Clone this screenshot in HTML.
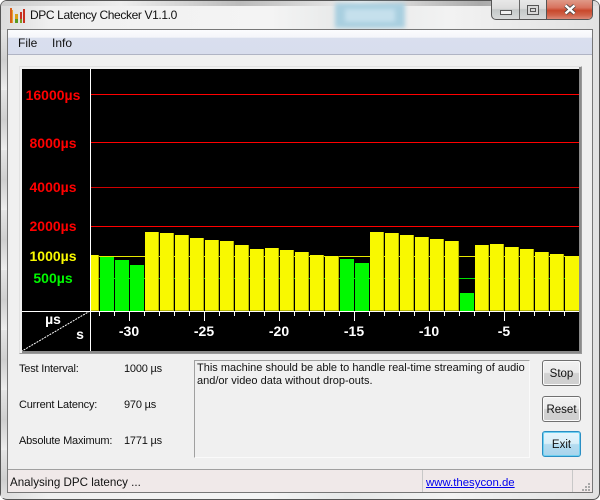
<!DOCTYPE html>
<html><head><meta charset="utf-8">
<style>
html,body{margin:0;padding:0;width:600px;height:500px;overflow:hidden;background:#fff}
body{position:relative;font-family:"Liberation Sans",sans-serif;font-size:12px;color:#111}
div,a,span{position:absolute;box-sizing:border-box;white-space:nowrap}
.b{top:0}.y{background:#f9f900;border-right:1px solid #b4b400;border-bottom:1px solid #b4b400}
.g{background:#00f900}
.l{height:1px;left:91px;width:488px}
.gl{font:bold 14px/16px "Liberation Sans",sans-serif;text-align:center;width:80px;left:13px}
.n{color:#fff;font:bold 14px/16px "Liberation Sans",sans-serif;text-align:center;width:50px;top:323px}
.t{background:#fff;width:1px;top:311px;height:5px}
.btn{left:542px;width:39px;height:26px;border:1px solid #707070;border-radius:3px;background:linear-gradient(#f2f2f2 0,#ebebeb 48%,#d2d2d2 52%,#cfcfcf 100%);box-shadow:inset 0 0 0 1px #fbfbfb;text-align:center;line-height:26px;font-size:11.5px}
.lb{left:19px;font-size:11px;letter-spacing:-.2px}
</style></head><body>
<!-- frame -->
<div style="left:0;top:0;width:600px;height:500px;border:1px solid #555;border-radius:7px;background:linear-gradient(90deg,#dcdcdc,#f0f0f0 8%,#f4f4f4 45%,#e6e8e8 58%,#f2f2f2 75%,#e2e2e2)"></div>
<div style="left:1px;top:1px;width:598px;height:5px;background:linear-gradient(90deg,#ccc,#eee 20%,#bbb 40%,#eee 60%,#aaa 80%,#ddd);border-radius:6px 6px 0 0"></div>
<div style="left:1px;top:30px;width:6px;height:468px;background:repeating-linear-gradient(#e4e4e4 0,#cfcfcf 30px,#eeeeee 60px)"></div>
<div style="left:335px;top:3px;width:70px;height:25px;background:#a9cfe0;filter:blur(2px)"></div>
<div style="left:345px;top:9px;width:50px;height:13px;background:#c5e0ec;filter:blur(2px)"></div>
<!-- icon -->
<svg style="position:absolute;left:9px;top:8px" width="16" height="16"><rect x="1" y="0" width="2" height="15" fill="#d9601a"/><rect x="3" y="2" width="1" height="13" fill="#e8a030"/><rect x="6" y="6" width="3" height="9" fill="#d8a018"/><rect x="6" y="11" width="3" height="4" fill="#5a9a20"/><rect x="11" y="4" width="2" height="11" fill="#c83020"/><rect x="14" y="1" width="2" height="14" fill="#c83020"/><rect x="11" y="11" width="2" height="4" fill="#7a9a20"/></svg>
<div style="left:30px;top:7px;font-size:12px;line-height:16px;color:#111;letter-spacing:-.38px">DPC Latency Checker V1.1.0</div>
<!-- caption buttons -->
<div style="left:491px;top:0;width:102px;height:20px;border:1px solid #555;border-top:0;border-radius:0 0 5px 5px;background:linear-gradient(#e8e8e8,#dcdcdc 45%,#c4c8c8 50%,#d8dada);overflow:hidden">
 <div style="left:27px;top:0;width:1px;height:19px;background:#666"></div>
 <div style="left:54px;top:0;width:47px;height:19px;background:linear-gradient(#e09a88,#d8735f 40%,#c8482c 55%,#d0634a 80%,#dc8a78);border-left:1px solid #555"></div>
 <div style="left:8px;top:10px;width:12px;height:5px;background:#f0f0f0;border:1px solid #555"></div>
 <div style="left:35px;top:5px;width:12px;height:10px;border:1px solid #555;background:#d8d8d8"></div>
 <div style="left:38px;top:8px;width:6px;height:4px;border:1px solid #555"></div>
 <svg style="position:absolute;left:72px;top:4px" width="12" height="11"><path d="M1.5 1.5L10.5 9.5M10.5 1.5L1.5 9.5" stroke="#444" stroke-width="4"/><path d="M1.5 1.5L10.5 9.5M10.5 1.5L1.5 9.5" stroke="#fff" stroke-width="2.4"/></svg>
</div>
<!-- client -->
<div style="left:7px;top:29px;width:586px;height:464px;border:1px solid #777;background:#f0f0f0"></div>
<div style="left:8px;top:30px;width:584px;height:25px;background:linear-gradient(#fbfcfe 0,#f5f6fa 30%,#d9dfee 34%,#d8dded 100%);border-bottom:1px solid #b0b4c4"></div>
<div style="left:18px;top:36px;line-height:14px">File</div>
<div style="left:52px;top:36px;line-height:14px">Info</div>
<!-- graph -->
<div style="left:19px;top:66px;width:563px;height:288px;border:1px solid;border-color:#e2e2e2 #999 #999 #e2e2e2;background:#f0f0f0;box-shadow:inset 0 0 0 1px #f0f0f0"></div>
<div style="left:22px;top:69px;width:557px;height:282px;background:#000"></div>
<div style="left:22px;top:351px;width:559px;height:2px;background:#8a8a8a"></div>
<div style="left:579px;top:67px;width:2px;height:286px;background:#8a8a8a"></div>
<div class="l" style="top:94px;background:#f00"></div>
<div class="l" style="top:142px;background:#f00"></div>
<div class="l" style="top:187px;background:#d00000"></div>
<div class="l" style="top:226px;background:#f00"></div>
<div class="l" style="top:256px;background:#e8e800"></div>
<div class="l" style="top:278px;background:#00e000"></div>
<!-- bars -->
<div class="y" style="left:91px;top:255px;width:8px;height:56px"></div>
<div class="g" style="left:100px;top:257px;width:14px;height:54px"></div>
<div class="g" style="left:115px;top:260px;width:14px;height:51px"></div>
<div class="g" style="left:130px;top:265px;width:14px;height:46px"></div>
<div class="y" style="left:145px;top:232px;width:14px;height:79px"></div>
<div class="y" style="left:160px;top:233px;width:14px;height:78px"></div>
<div class="y" style="left:175px;top:235px;width:14px;height:76px"></div>
<div class="y" style="left:190px;top:238px;width:14px;height:73px"></div>
<div class="y" style="left:205px;top:240px;width:14px;height:71px"></div>
<div class="y" style="left:220px;top:241px;width:14px;height:70px"></div>
<div class="y" style="left:235px;top:245px;width:14px;height:66px"></div>
<div class="y" style="left:250px;top:249px;width:14px;height:62px"></div>
<div class="y" style="left:265px;top:248px;width:14px;height:63px"></div>
<div class="y" style="left:280px;top:250px;width:14px;height:61px"></div>
<div class="y" style="left:295px;top:252px;width:14px;height:59px"></div>
<div class="y" style="left:310px;top:255px;width:14px;height:56px"></div>
<div class="y" style="left:325px;top:256px;width:14px;height:55px"></div>
<div class="g" style="left:340px;top:259px;width:14px;height:52px"></div>
<div class="g" style="left:355px;top:263px;width:14px;height:48px"></div>
<div class="y" style="left:370px;top:232px;width:14px;height:79px"></div>
<div class="y" style="left:385px;top:233px;width:14px;height:78px"></div>
<div class="y" style="left:400px;top:235px;width:14px;height:76px"></div>
<div class="y" style="left:415px;top:237px;width:14px;height:74px"></div>
<div class="y" style="left:430px;top:239px;width:14px;height:72px"></div>
<div class="y" style="left:445px;top:241px;width:14px;height:70px"></div>
<div class="g" style="left:460px;top:293px;width:14px;height:18px"></div>
<div class="y" style="left:475px;top:245px;width:14px;height:66px"></div>
<div class="y" style="left:490px;top:244px;width:14px;height:67px"></div>
<div class="y" style="left:505px;top:247px;width:14px;height:64px"></div>
<div class="y" style="left:520px;top:249px;width:14px;height:62px"></div>
<div class="y" style="left:535px;top:252px;width:14px;height:59px"></div>
<div class="y" style="left:550px;top:254px;width:14px;height:57px"></div>
<div class="y" style="left:565px;top:256px;width:14px;height:55px;border-right:0"></div>
<!-- axes -->
<div style="left:90px;top:69px;width:1px;height:282px;background:#fff"></div>
<div style="left:22px;top:311px;width:557px;height:1px;background:#fff"></div>
<svg style="position:absolute;left:22px;top:311px" width="69" height="40"><line x1="68" y1="0" x2="0" y2="40" stroke="#fff" stroke-width="1" stroke-dasharray="2 1"/></svg>
<div class="t" style="left:99px"></div><div class="t" style="left:114px"></div><div class="t" style="left:129px;height:10px"></div><div class="t" style="left:144px"></div><div class="t" style="left:159px"></div><div class="t" style="left:174px"></div><div class="t" style="left:189px"></div><div class="t" style="left:204px;height:10px"></div><div class="t" style="left:219px"></div><div class="t" style="left:234px"></div><div class="t" style="left:249px"></div><div class="t" style="left:264px"></div><div class="t" style="left:279px;height:10px"></div><div class="t" style="left:294px"></div><div class="t" style="left:309px"></div><div class="t" style="left:324px"></div><div class="t" style="left:339px"></div><div class="t" style="left:354px;height:10px"></div><div class="t" style="left:369px"></div><div class="t" style="left:384px"></div><div class="t" style="left:399px"></div><div class="t" style="left:414px"></div><div class="t" style="left:429px;height:10px"></div><div class="t" style="left:444px"></div><div class="t" style="left:459px"></div><div class="t" style="left:474px"></div><div class="t" style="left:489px"></div><div class="t" style="left:504px;height:10px"></div><div class="t" style="left:519px"></div><div class="t" style="left:534px"></div><div class="t" style="left:549px"></div><div class="t" style="left:564px"></div>
<!-- labels -->
<div class="gl" style="top:87px;color:#f00">16000µs</div>
<div class="gl" style="top:135px;color:#f00">8000µs</div>
<div class="gl" style="top:179px;color:#f00">4000µs</div>
<div class="gl" style="top:218px;color:#f00">2000µs</div>
<div class="gl" style="top:248px;color:#f9f900">1000µs</div>
<div class="gl" style="top:270px;color:#00f900">500µs</div>
<div class="n" style="left:28px;top:311px;width:50px">µs</div>
<div class="n" style="left:55px;top:326px;width:50px">s</div>
<div class="n" style="left:104px">-30</div>
<div class="n" style="left:179px">-25</div>
<div class="n" style="left:254px">-20</div>
<div class="n" style="left:329px">-15</div>
<div class="n" style="left:404px">-10</div>
<div class="n" style="left:479px">-5</div>
<!-- info -->
<div class="lb" style="top:362px;line-height:15px">Test Interval:</div>
<div class="lb" style="top:398px;line-height:15px">Current Latency:</div>
<div class="lb" style="top:434px;line-height:15px">Absolute Maximum:</div>
<div class="lb" style="left:124px;top:362px;line-height:15px">1000 µs</div>
<div class="lb" style="left:124px;top:398px;line-height:15px">970 µs</div>
<div class="lb" style="left:124px;top:434px;line-height:15px">1771 µs</div>
<div style="left:194px;top:360px;width:336px;height:98px;border:1px solid;border-color:#a0a0a0 #fafafa #fafafa #a0a0a0;background:#f0f0f0"></div>
<div style="left:197px;top:362px;line-height:13px;font-size:11px">This machine should be able to handle real-time streaming of audio<br>and/or video data without drop-outs.</div>
<!-- buttons -->
<div class="btn" style="top:360px">Stop</div>
<div class="btn" style="top:396px">Reset</div>
<div class="btn" style="top:431px;border-color:#2a8fc4;background:linear-gradient(#e6f5fc 0,#d8eff9 48%,#b4dcf0 52%,#a8d4ec 100%);box-shadow:inset 0 0 0 1px #6fd0f0">Exit</div>
<!-- status -->
<div style="left:8px;top:469px;width:584px;height:23px;background:#f0e9e9;border-top:1px solid #a0a0a0"></div>
<div style="left:422px;top:470px;width:1px;height:22px;background:#c8c8c8"></div>
<div style="left:572px;top:470px;width:1px;height:22px;background:#c8c8c8"></div>
<div style="left:10px;top:476px;line-height:14px;font-size:11.6px">Analysing DPC latency ...</div>
<a style="left:426px;top:476px;line-height:14px;color:#00e;text-decoration:underline;font-size:11.4px">www.thesycon.de</a>
<svg style="position:absolute;left:581px;top:482px" width="10" height="10" fill="#a8a8a8"><rect x="7" y="1" width="2" height="2"/><rect x="4" y="4" width="2" height="2"/><rect x="7" y="4" width="2" height="2"/><rect x="1" y="7" width="2" height="2"/><rect x="4" y="7" width="2" height="2"/><rect x="7" y="7" width="2" height="2"/></svg>
</body></html>
